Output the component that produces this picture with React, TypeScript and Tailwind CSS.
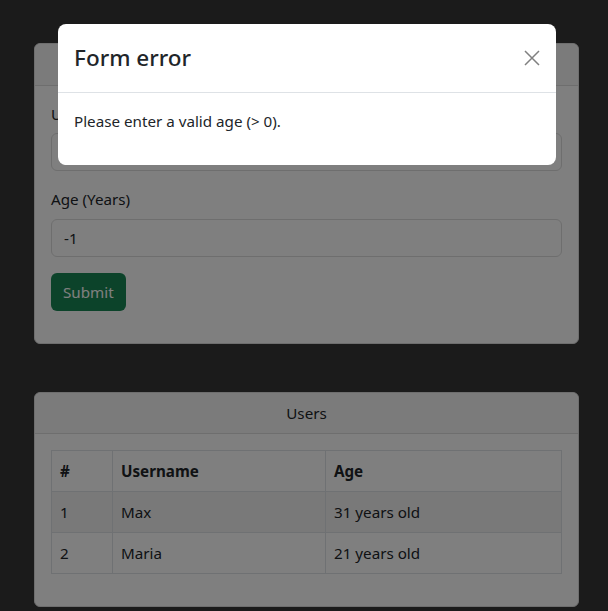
import { useState } from "react";

type User = { id: number; username: string; age: number };

const users: User[] = [
  { id: 1, username: "Max", age: 31 },
  { id: 2, username: "Maria", age: 21 },
];

function CloseIcon() {
  return (
    <svg width="16" height="16" viewBox="0 0 16 16" fill="none">
      <path d="M1 1l14 14M15 1L1 15" stroke="currentColor" strokeWidth="1.5" />
    </svg>
  );
}

export default function App() {
  const [username, setUsername] = useState("");
  const [age, setAge] = useState("-1");
  const [showError, setShowError] = useState(true);

  return (
    <div
      className="relative min-h-[611px] bg-[#373737] pt-[43px] pb-[4px] text-[15.2px] leading-[24px] text-[#212529]"
      style={{ fontFamily: '"Noto Sans", "Open Sans", sans-serif' }}
    >
      {/* add user form */}
      <div className="ml-[34px] w-[545px] rounded-[6px] border border-[#dcdcdc] bg-white">
        <div className="h-[42px] border-b border-[#dcdcdc] bg-[#f7f7f7] flex items-center justify-center rounded-t-[6px]">
          Add User
        </div>
        <form
          className="px-4 pt-4 pb-8"
          onSubmit={(e) => {
            e.preventDefault();
            setShowError(true);
          }}
        >
          <label className="block mb-[7px]">Username</label>
          <input
            value={username}
            onChange={(e) => setUsername(e.target.value)}
            className="block w-full h-[38px] px-3 rounded-[6px] border border-[#dcdcdc] bg-white outline-none"
          />
          <label className="block mt-4 mb-2">Age (Years)</label>
          <input
            value={age}
            onChange={(e) => setAge(e.target.value)}
            className="block w-full h-[38px] px-3 rounded-[6px] border border-[#dcdcdc] bg-white outline-none"
          />
          <button
            type="submit"
            className="mt-4 h-[38px] px-3 rounded-[6px] bg-[#198754] text-white"
          >
            Submit
          </button>
        </form>
      </div>

      {/* users list */}
      <div className="ml-[34px] mt-[48px] w-[545px] rounded-[6px] border border-[#dcdcdc] bg-white">
        <div className="h-[41px] border-b border-[#dcdcdc] bg-[#f7f7f7] flex items-center justify-center rounded-t-[6px]">
          Users
        </div>
        <div className="p-4">
          <table className="w-full mb-4 border-collapse border border-[#dee2e6]">
            <thead>
              <tr>
                <th className="w-[61px] h-[41px] px-2 text-left font-bold border border-[#dee2e6]">#</th>
                <th className="w-[213px] px-2 text-left font-bold border border-[#dee2e6]">Username</th>
                <th className="px-2 text-left font-bold border border-[#dee2e6]">Age</th>
              </tr>
            </thead>
            <tbody>
              {users.map((u, i) => (
                <tr key={u.id} className={i % 2 === 0 ? "bg-[#f2f2f2]" : ""}>
                  <td className="h-[41px] px-2 border border-[#dee2e6]">{u.id}</td>
                  <td className="px-2 border border-[#dee2e6]">{u.username}</td>
                  <td className="px-2 border border-[#dee2e6]">{u.age} years old</td>
                </tr>
              ))}
            </tbody>
          </table>
        </div>
      </div>

      {showError && (
        <>
          <div className="absolute inset-0 bg-black/50" />
          <div className="absolute top-[24px] left-[58px] w-[498px] rounded-[8px] bg-white">
            <div className="flex items-center justify-between p-4 border-b border-[#dee2e6]">
              <h5 className="text-[22.5px] leading-[36px] font-medium">Form error</h5>
              <button onClick={() => setShowError(false)} className="text-[#808080]">
                <CloseIcon />
              </button>
            </div>
            <div className="p-4">
              <p className="mb-4">Please enter a valid age (&gt; 0).</p>
            </div>
          </div>
        </>
      )}
    </div>
  );
}
